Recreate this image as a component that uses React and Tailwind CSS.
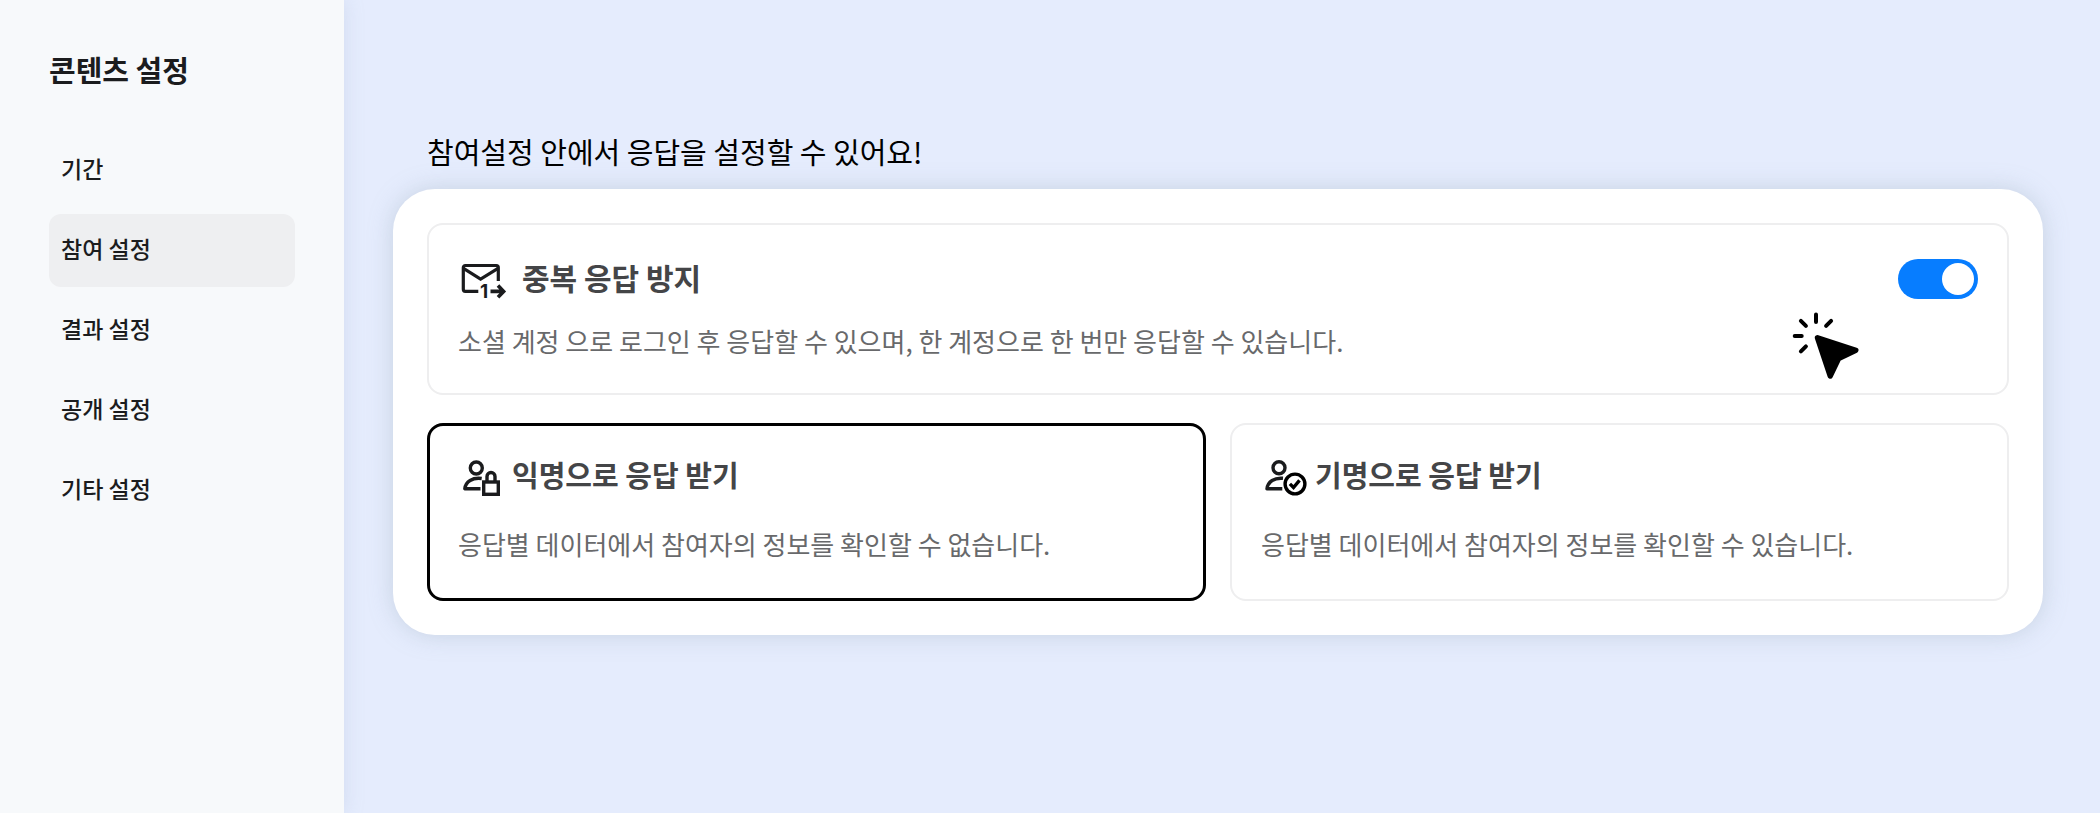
import { useState } from "react"

const MENU = ["기간", "참여 설정", "결과 설정", "공개 설정", "기타 설정"]

function MailOnceIcon() {
  return (
    <svg
      width="48"
      height="40"
      viewBox="-3 -4 48 40"
      fill="none"
      stroke="#1a1b1d"
      strokeWidth="3.2"
      className="overflow-visible"
      aria-hidden="true"
    >
      <path d="M17.3 28.3H4.3a2 2 0 0 1-2-2V4.5a2 2 0 0 1 2-2h31a2 2 0 0 1 2 2V18" />
      <path d="M2.5 5.3 19.6 16 37 5.3" />
      <path d="M29.5 28.4h12M37 22.6l5.6 5.8-5.6 5.8" strokeWidth="3.6" />
      <text x="19" y="35" fill="#1a1b1d" stroke="none" className="font-['Inter',sans-serif] text-[19px] leading-none font-bold">
        1
      </text>
    </svg>
  )
}

function UserLockIcon() {
  return (
    <svg width="46" height="40" viewBox="-4 -3 46 40" fill="none" stroke="#1a1b1d" strokeWidth="3.4" aria-hidden="true">
      <circle cx="14.3" cy="9" r="6" />
      <path d="M19.7 19.5C10.5 18.3 3.6 22.5 2.8 29.8h15.7" strokeLinejoin="round" />
      <rect x="21.7" y="23" width="14.6" height="12.3" />
      <path d="M25 23v-5.5a4 4 0 0 1 8 0V23" />
    </svg>
  )
}

function UserCheckIcon() {
  return (
    <svg width="46" height="40" viewBox="-3 -3 46 40" fill="none" stroke="#1a1b1d" strokeWidth="3.4" aria-hidden="true">
      <circle cx="15" cy="8.7" r="6" />
      <path d="M19 19.3C10.5 18.5 3.8 22.5 3 29.8h15.3" strokeLinejoin="round" />
      <g stroke="#000">
        <circle cx="31" cy="25" r="9.9" />
        <path d="m25.9 24.9 3.6 3.6 6-7.2" />
      </g>
    </svg>
  )
}

function ClickCursor() {
  return (
    <svg width="72" height="70" viewBox="0 0 72 70" stroke="#000" strokeLinecap="round" strokeLinejoin="round" aria-hidden="true">
      <path d="m27.5 26.8 38.3 12.4-17.2 8.3L40.2 65Z" strokeWidth="5.4" />
      <path d="M26 3.5V11M10.9 9.9l5 5M41.1 9.9l-5 5M4.7 25h7M15.9 35.3l-5 5" strokeWidth="4" />
    </svg>
  )
}

const OPTIONS = [
  {
    id: "anonymous",
    icon: <UserLockIcon />,
    title: "익명으로 응답 받기",
    desc: "응답별 데이터에서 참여자의 정보를 확인할 수 없습니다.",
  },
  {
    id: "named",
    icon: <UserCheckIcon />,
    title: "기명으로 응답 받기",
    desc: "응답별 데이터에서 참여자의 정보를 확인할 수 있습니다.",
  },
]

function Sidebar() {
  const [active, setActive] = useState("참여 설정")

  return (
    <aside className="relative w-[344px] shrink-0 bg-[#f7f9fb] px-[49px] pt-[49px] shadow-[0_0_18px_rgba(150,170,200,0.25)]">
      <h1 className="text-[29px] leading-10 font-semibold text-[#1b1c1e]">콘텐츠 설정</h1>
      <nav className="mt-[45px] flex flex-col gap-[7px]">
        {MENU.map((item) => (
          <button
            key={item}
            type="button"
            onClick={() => setActive(item)}
            className={`h-[73px] rounded-xl px-3 pb-1 text-left text-[23px] font-medium text-[#1b1c1e] ${
              active === item ? "bg-[#eeeff1]" : ""
            }`}
          >
            {item}
          </button>
        ))}
      </nav>
    </aside>
  )
}

function DuplicateCard() {
  const [enabled, setEnabled] = useState(true)

  return (
    <section className="relative rounded-2xl border-2 border-[#eeeeef] px-[29px] py-[34px]">
      <div className="flex items-start justify-between">
        <div className="flex items-start gap-4">
          <MailOnceIcon />
          <h2 id="duplicate" className="text-[30px] leading-9 font-semibold text-[#444547]">
            중복 응답 방지
          </h2>
        </div>
        <label className="relative flex h-10 w-20 cursor-pointer">
          <input
            type="checkbox"
            role="switch"
            aria-labelledby="duplicate"
            checked={enabled}
            onChange={() => setEnabled(!enabled)}
            className="peer sr-only"
          />
          <span className="flex h-10 w-20 items-center justify-start rounded-full bg-gray-300 px-1 peer-checked:justify-end peer-checked:bg-[#077dff]">
            <span className="size-8 rounded-full bg-white" />
          </span>
        </label>
      </div>
      <p className="mt-6 text-[26px] leading-9 text-[#68696b]">
        소셜 계정 으로 로그인 후 응답할 수 있으며, 한 계정으로 한 번만 응답할 수 있습니다.
      </p>
      <div className="pointer-events-none absolute right-[145px] bottom-3">
        <ClickCursor />
      </div>
    </section>
  )
}

function ResponseOptions() {
  const [selected, setSelected] = useState("anonymous")

  return (
    <div role="radiogroup" aria-label="응답 방식" className="mt-7 grid grid-cols-2 gap-6">
      {OPTIONS.map((option) => (
        <label
          key={option.id}
          className={`relative cursor-pointer rounded-2xl ${
            selected === option.id
              ? "border-3 border-black px-7 py-[30px]"
              : "border-2 border-[#eeeeef] px-[29px] py-[31px]"
          }`}
        >
          <input
            type="radio"
            name="response"
            value={option.id}
            checked={selected === option.id}
            onChange={() => setSelected(option.id)}
            className="sr-only"
          />
          <span className="flex items-start gap-2">
            {option.icon}
            <span className="text-[29px] leading-9 font-semibold text-[#444547]">{option.title}</span>
          </span>
          <span className="mt-[30px] mb-1.5 block text-[26px] leading-9 text-[#68696b]">{option.desc}</span>
        </label>
      ))}
    </div>
  )
}

export default function App() {
  return (
    <div className="flex min-h-screen bg-[#e5ecfd] font-['Noto_Sans_CJK_KR',sans-serif]">
      <Sidebar />
      <main className="min-w-0 flex-1 pt-[131px] pr-[57px] pl-[49px]">
        <p className="pl-[34px] text-[29px] leading-10 text-black">
          참여설정 안에서 응답을 설정할 수 있어요!
        </p>
        <div className="mt-[18px] rounded-[42px] bg-white p-[34px] shadow-[0_0_24px_rgba(140,160,175,0.35)]">
          <DuplicateCard />
          <ResponseOptions />
        </div>
      </main>
    </div>
  )
}
